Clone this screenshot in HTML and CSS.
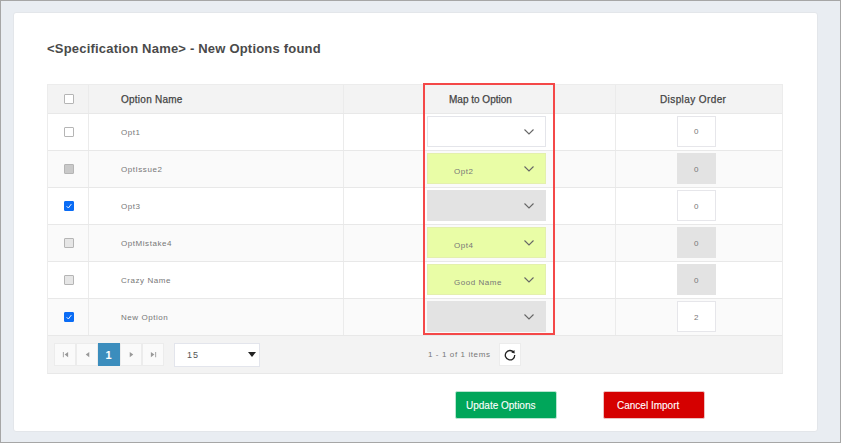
FILE: index.html
```html
<!DOCTYPE html>
<html lang="en">
<head>
<meta charset="utf-8">
<title>New Options found</title>
<link rel="stylesheet" href="styles.css">
</head>
<body>
<div class="frame">
  <main class="card">
    <h1 class="title">&lt;Specification Name&gt; - New Options found</h1>
    <div class="grid">
      <div class="row head">
        <div class="cell check"><span class="box"></span></div>
        <div class="cell name">Option Name</div>
        <div class="cell map">Map to Option</div>
        <div class="cell order">Display Order</div>
      </div>
      <div class="row">
        <div class="cell check"><span class="box"></span></div>
        <div class="cell name">Opt1</div>
        <div class="cell map"><div class="select"><svg class="chev" viewBox="0 0 10 6"><path d="M.5.5 5 5 9.500.5"/></svg></div></div>
        <div class="cell order"><span class="num">0</span></div>
      </div>
      <div class="row alt">
        <div class="cell check"><span class="box off dark"></span></div>
        <div class="cell name">OptIssue2</div>
        <div class="cell map"><div class="select hit"><span class="val">Opt2</span><svg class="chev" viewBox="0 0 10 6"><path d="M.5.5 5 5 9.500.5"/></svg></div></div>
        <div class="cell order"><span class="num off">0</span></div>
      </div>
      <div class="row">
        <div class="cell check"><span class="box on"><svg viewBox="0 0 10 10"><path d="M2 5.200 4.200 7.500 8 2.500"/></svg></span></div>
        <div class="cell name">Opt3</div>
        <div class="cell map"><div class="select off"><svg class="chev" viewBox="0 0 10 6"><path d="M.5.5 5 5 9.500.5"/></svg></div></div>
        <div class="cell order"><span class="num">0</span></div>
      </div>
      <div class="row alt">
        <div class="cell check"><span class="box off"></span></div>
        <div class="cell name">OptMistake4</div>
        <div class="cell map"><div class="select hit"><span class="val">Opt4</span><svg class="chev" viewBox="0 0 10 6"><path d="M.5.5 5 5 9.500.5"/></svg></div></div>
        <div class="cell order"><span class="num off">0</span></div>
      </div>
      <div class="row">
        <div class="cell check"><span class="box off"></span></div>
        <div class="cell name">Crazy Name</div>
        <div class="cell map"><div class="select hit"><span class="val">Good Name</span><svg class="chev" viewBox="0 0 10 6"><path d="M.5.5 5 5 9.500.5"/></svg></div></div>
        <div class="cell order"><span class="num off">0</span></div>
      </div>
      <div class="row alt">
        <div class="cell check"><span class="box on"><svg viewBox="0 0 10 10"><path d="M2 5.200 4.200 7.500 8 2.500"/></svg></span></div>
        <div class="cell name">New Option</div>
        <div class="cell map"><div class="select off"><svg class="chev" viewBox="0 0 10 6"><path d="M.5.5 5 5 9.500.5"/></svg></div></div>
        <div class="cell order"><span class="num">2</span></div>
      </div>
      <div class="pager">
        <div class="pages">
          <span class="pg"><svg viewBox="0 0 8 8"><path d="M1 1h1v6H1zM7 1v6L3 4z"/></svg></span>
          <span class="pg"><svg viewBox="0 0 8 8"><path d="M6 1v6L2 4z"/></svg></span>
          <span class="pg cur">1</span>
          <span class="pg"><svg viewBox="0 0 8 8"><path d="M2 1v6l4-3z"/></svg></span>
          <span class="pg"><svg viewBox="0 0 8 8"><path d="M7 1H6v6h1zM1 1v6l4-3z"/></svg></span>
        </div>
        <div class="size"><span>15</span><svg viewBox="0 0 8 5"><path d="M0 0h8L4 5z"/></svg></div>
        <div class="info">1 - 1 of 1 items</div>
        <span class="refresh"><svg viewBox="0 0 12 12"><path d="M9.700 3.300A4.700 4.700 0 1 0 10.700 6"/><path class="tip" d="M7.300 3.600 10.400.9 10.700 4.500z"/></svg></span>
      </div>
      <div class="mark"></div>
    </div>
    <div class="actions">
      <button class="btn go" type="button">Update Options</button>
      <button class="btn stop" type="button">Cancel Import</button>
    </div>
  </main>
</div>
</body>
</html>
```
FILE: styles.css
```css
* { box-sizing: border-box; }
html, body { margin: 0; height: 100%; }
body { font-family: "Liberation Sans", Arial, sans-serif; color: #555; }
.frame {
  width: 841px; height: 443px; background: #e9edf2;
  border: 1px solid #a6a6a6;
  padding: 11px 22px 10px 12px;
}
.card {
  height: 420px; background: #fff; border: 1px solid #e3e6ea; border-radius: 3px;
  padding: 27px 33px 0 33px;
}
.title {
  margin: 0 0 26px; font-size: 13px; line-height: 18px; font-weight: 700;
  color: #4a4a4a; letter-spacing: .2px;
}
.grid { position: relative; width: 736px; border: 1px solid #ececec; border-bottom-color: #e8e8e8; }
.row {
  display: grid; grid-template-columns: 41px 255px 272px 166px;
  height: 37px; border-bottom: 1px solid #e8e8e8; background: #fff;
}
.row.alt { background: #fafafa; }
.row.head { height: 29px; background: #f3f3f3; }
.cell { display: flex; align-items: center; font-size: 8px; letter-spacing: .55px; color: #777; border-right: 1px solid #ebebeb; min-width: 0; }
.cell.order { border-right: 0; }
.cell.check { justify-content: center; padding-left: 1px; }
.cell.name { padding-left: 32px; }
.head .cell { font-size: 10px; font-weight: 400; letter-spacing: .25px; color: #444; -webkit-text-stroke: .25px #444; }
.head .map { justify-content: flex-start; padding-left: 105px; letter-spacing: 0; }
.head .order { justify-content: flex-start; padding-left: 44px; letter-spacing: .4px; }
.row:not(.head) .cell.map { align-items: flex-start; padding: 2px 0 0 83px; }
.row:not(.head) .cell.order { justify-content: flex-start; align-items: flex-start; padding: 2px 0 0 61px; }
.box { width: 10px; height: 10px; border: 1px solid #b5b5b5; border-radius: 1px; background: #fff; display: block; }
.box.off { background: #e6e6e6; }
.box.dark { background: #c9c9c9; }
.box.on { background: #0a6cf5; border-color: #0a6cf5; }
.box svg { display: block; width: 8px; height: 8px; fill: none; stroke: #fff; stroke-width: 1.100; }
.select {
  position: relative; width: 119px; height: 31px; border: 1px solid #e4e5ea; background: #fff;
  display: flex; align-items: center; padding-left: 26px; font-size: 8px; color: #777;
}
.select.hit { background: #e9fda6; border-color: #e4f0ad; }
.select.off { background: #e3e3e3; border-color: #e3e3e3; }
.val { position: relative; top: 3px; letter-spacing: .55px; }
.chev { position: absolute; right: 11px; top: 12px; width: 10px; height: 6px; fill: none; stroke: #666; stroke-width: 1.100; }
.num {
  width: 39px; height: 31px; border: 1px solid #e6e6ea; background: #fff;
  display: flex; align-items: center; justify-content: center; font-size: 8px; color: #777;
}
.row:nth-child(n+3) .num { padding-top: 1px; }
.num.off { background: #e3e3e3; border-color: #e3e3e3; }
.pager { display: flex; align-items: center; height: 37px; background: #f3f3f3; padding-left: 6px; }
.pages { display: flex; gap: 0; }
.pg {
  width: 22px; height: 23px; border: 1px solid #ececec; background: #fafafa;
  display: flex; align-items: center; justify-content: center;
}
.pg svg { width: 7px; height: 7px; fill: #999; }
.pg.cur { background: #3b8dbd; border-color: #3b8dbd; color: #fff; font-weight: 700; font-size: 11px; padding-right: 1px; }
.size {
  width: 86px; height: 24px; margin-left: 10px; background: #fff; border: 1px solid #e3e5ec;
  display: flex; align-items: center; justify-content: space-between; padding: 0 3px 0 12px;
  font-size: 9px; letter-spacing: .9px; color: #555;
}
.size svg { width: 8px; height: 5px; fill: #222; }
.info { margin-left: 168px; font-size: 8px; letter-spacing: .6px; color: #777; }
.refresh {
  margin-left: 8px; width: 22px; height: 23px; background: #fff; border: 1px solid #ececec;
  display: flex; align-items: center; justify-content: center;
}
.refresh svg { width: 12px; height: 12px; fill: none; stroke: #222; stroke-width: 1.300; }
.refresh .tip { fill: #222; stroke: none; }
.mark { position: absolute; left: 375px; top: -2px; width: 132px; height: 252px; border: 2px solid #f44848; pointer-events: none; }
.actions { display: flex; margin-top: 17px; padding-left: 408px; gap: 46px; }
.btn {
  width: 102px; height: 28px; border: 1px solid; border-radius: 2px; color: #fff;
  font: 400 10px "Liberation Sans", Arial, sans-serif; text-align: left; padding: 0 0 0 10px;
  -webkit-text-stroke: .1px #fff;
}
.go { background: #00a65a; border-color: #b8e5d0; }
.stop { background: #d50000; border-color: #ecc0c0; padding-left: 13px; }
```
